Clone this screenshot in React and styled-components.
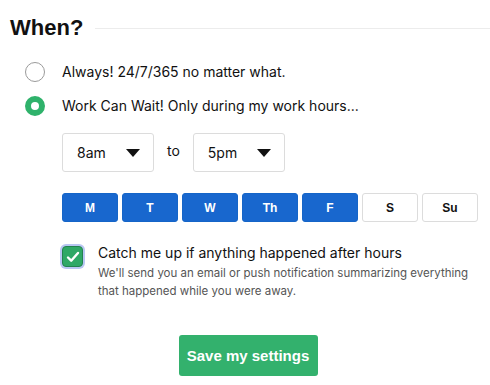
import React, { useState } from 'react';
import styled, { createGlobalStyle } from 'styled-components';

const GlobalStyle = createGlobalStyle`
  html, body {
    margin: 0;
    padding: 0;
    background: #fff;
  }
  body {
    font-family: Inter, "Liberation Sans", sans-serif;
    color: #111;
  }
`;

const Page = styled.div`
  width: 490px;
  height: 385px;
  padding: 15px 0 0 10px;
  box-sizing: border-box;
  overflow: hidden;
`;

const HeadingRow = styled.div`
  display: flex;
  align-items: center;
  gap: 12px;
`;

const Heading = styled.h2`
  margin: 0;
  font-family: "Liberation Sans", Arial, sans-serif;
  font-weight: 700;
  font-size: 22px;
  line-height: 26px;
  color: #111;
`;

const Rule = styled.div`
  flex: 1;
  height: 1px;
  background: #ececec;
`;

const Options = styled.div`
  display: flex;
  flex-direction: column;
  gap: 14px;
  margin: 21px 0 0 15px;
`;

const RadioRow = styled.label`
  display: flex;
  align-items: center;
  gap: 17px;
  font-size: 14px;
  line-height: 20px;
  cursor: pointer;
`;

const RadioDot = styled.span`
  width: 20px;
  height: 20px;
  border-radius: 50%;
  box-sizing: border-box;
  border: ${p => (p.$on ? '6.5px solid #2fb26b' : '1px solid #9a9a9a')};
  background: #fff;
`;

const Indent = styled.div`
  margin-left: 52px;
`;

const TimeRow = styled.div`
  display: flex;
  align-items: center;
  gap: 13px;
  margin-top: 17px;
`;

const Select = styled.div`
  width: 92px;
  height: 39px;
  box-sizing: border-box;
  border: 1px solid #dcdcdc;
  border-radius: 3px;
  display: flex;
  align-items: center;
  justify-content: space-between;
  padding: 0 13px 0 14px;
  font-size: 14px;
`;

const Caret = styled.span`
  width: 0;
  height: 0;
  border-left: 7px solid transparent;
  border-right: 7px solid transparent;
  border-top: 8px solid #111;
`;

const ToText = styled.span`
  font-size: 14px;
  margin-top: -4px;
`;

const Days = styled.div`
  display: flex;
  gap: 4px;
  margin-top: 21px;
`;

const Day = styled.button`
  width: 56px;
  height: 29px;
  box-sizing: border-box;
  border-radius: 3px;
  border: 1px solid ${p => (p.$on ? '#1565c8' : '#dcdcdc')};
  background: ${p => (p.$on ? '#1867ce' : '#fff')};
  color: ${p => (p.$on ? '#fff' : '#111')};
  font-family: "Liberation Sans", Arial, sans-serif;
  font-weight: 700;
  font-size: 12px;
  padding: 0;
  cursor: pointer;
`;

const CatchRow = styled.div`
  display: flex;
  gap: 15px;
  margin-top: 21px;
`;

const Check = styled.span`
  flex: none;
  width: 21px;
  height: 21px;
  box-sizing: border-box;
  border-radius: 4px;
  background: #2fa866;
  border: 1px solid #23824f;
  box-shadow: 0 0 0 2px #b9c6f2;
  display: flex;
  align-items: center;
  justify-content: center;
  margin-top: 3px;
`;

const CatchText = styled.div`
  display: flex;
  flex-direction: column;
`;

const CatchTitle = styled.div`
  font-size: 14px;
  line-height: 20px;
`;

const CatchNote = styled.div`
  font-size: 11.5px;
  line-height: 18px;
  color: #555;
  margin-top: 1px;
`;

const Footer = styled.div`
  display: flex;
  justify-content: center;
  margin-top: 35px;
  padding-right: 4px;
`;

const SaveButton = styled.button`
  width: 139px;
  height: 41px;
  border: none;
  border-radius: 3px;
  background: #33b16d;
  color: #fff;
  font-family: "Liberation Sans", Arial, sans-serif;
  font-weight: 700;
  font-size: 15px;
  cursor: pointer;
`;

const days = [
  { label: 'M', on: true },
  { label: 'T', on: true },
  { label: 'W', on: true },
  { label: 'Th', on: true },
  { label: 'F', on: true },
  { label: 'S', on: false },
  { label: 'Su', on: false },
];

const App = () => {
  const [mode, setMode] = useState('work');

  return (
    <Page>
      <GlobalStyle />
      <HeadingRow>
        <Heading>When?</Heading>
        <Rule />
      </HeadingRow>
      <Options>
        <RadioRow onClick={() => setMode('always')}>
          <RadioDot $on={mode === 'always'} />
          Always! 24/7/365 no matter what.
        </RadioRow>
        <RadioRow onClick={() => setMode('work')}>
          <RadioDot $on={mode === 'work'} />
          Work Can Wait! Only during my work hours...
        </RadioRow>
      </Options>
      <Indent>
        <TimeRow>
          <Select>
            8am
            <Caret />
          </Select>
          <ToText>to</ToText>
          <Select>
            5pm
            <Caret />
          </Select>
        </TimeRow>
        <Days>
          {days.map(d => (
            <Day key={d.label} $on={d.on}>{d.label}</Day>
          ))}
        </Days>
        <CatchRow>
          <Check>
            <svg width="14" height="12" viewBox="0 0 14 12">
              <path d="M2 6.5l3.2 3.2L12 2" fill="none" stroke="#fff" strokeWidth="2.4" strokeLinecap="round" strokeLinejoin="round" />
            </svg>
          </Check>
          <CatchText>
            <CatchTitle>Catch me up if anything happened after hours</CatchTitle>
            <CatchNote>
              We'll send you an email or push notification summarizing everything
              <br />
              that happened while you were away.
            </CatchNote>
          </CatchText>
        </CatchRow>
      </Indent>
      <Footer>
        <SaveButton>Save my settings</SaveButton>
      </Footer>
    </Page>
  );
};

export default App;
